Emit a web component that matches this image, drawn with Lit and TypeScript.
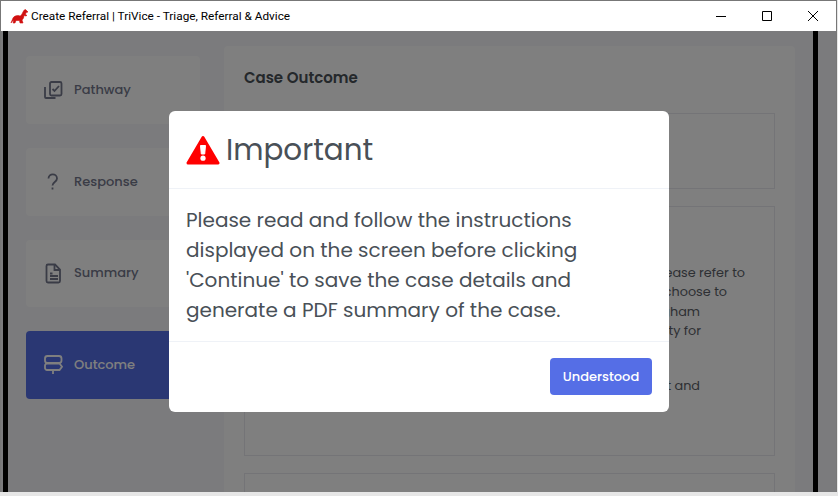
import { LitElement, html, css, svg } from 'lit';
import { customElement } from 'lit/decorators.js';

const navItems = [
  { label: 'Pathway', cls: '', icon: svg`<rect x="9" y="4" width="11.500" height="13.500" rx="1.500"/><path d="M4 9v10a1 1 0 0 0 1 1h9.500"/><path d="M11.500 11l2 2 4.500-5"/>` },
  { label: 'Response', cls: '', icon: svg`<path d="M7.500 8.500c0-5.500 8.500-5.500 8.500 0 0 3.500-4.500 3.500-4.500 7"/><path d="M11.500 17.500v2"/>` },
  { label: 'Summary', cls: '', icon: svg`<path d="M7 3.500h7l5 5V20a1.500 1.500 0 0 1-1.500 1.500h-10.500A1.500 1.500 0 0 1 5.500 20V5A1.500 1.500 0 0 1 7 3.500z"/><path d="M13.500 3.500v5.500h5.500"/><path d="M9 12.500h2.500M9 15h8M9 18h8"/>` },
  { label: 'Outcome', cls: 'active', icon: svg`<rect x="4" y="3" width="16.500" height="7" rx="2.500"/><path d="M6 10.500h12.500l2.500 3.200-2.500 3.300H6a2 2 0 0 1-2-2v-2.500a2 2 0 0 1 2-2z"/><path d="M12 17v4"/>` },
];

const behindLines = [
  { text: 'Please refer to', right: 30, cls: '' },
  { text: 'choose to', right: 48, cls: '' },
  { text: 'Birmingham', right: 75, cls: '' },
  { text: 'facility for', right: 74, cls: '' },
  { text: 'it and', right: 75, cls: 'para' },
];

@customElement('app-root')
export class AppRoot extends LitElement {
  static styles = css`
    :host {
      display: block;
      position: relative;
      width: 838px;
      height: 496px;
      overflow: hidden;
      background: #e6e6e6;
      font-family: Poppins, 'Open Sans', 'Liberation Sans', sans-serif;
    }
    .window {
      height: 492px;
      width: 837px;
      display: flex;
      flex-direction: column;
      position: relative;
      box-sizing: border-box;
      border: 1px solid #777;
      border-bottom: none;
      background: #f8f8fb;
    }
    .titlebar {
      height: 30px;
      flex: none;
      background: #fff;
      display: flex;
      align-items: center;
      padding-left: 9px;
      font: 11.800px Roboto, 'Open Sans', sans-serif;
      color: #000;
    }
    .titlebar .logo { width: 18px; height: 15px; margin-right: 3px; }
    .titlebar .title { flex: 1; white-space: nowrap; }
    .controls { display: flex; height: 30px; }
    .controls svg { width: 46px; height: 30px; fill: none; stroke: #000; stroke-width: 1; }
    .page {
      flex: 1;
      min-height: 0;
      display: flex;
      background: #f6f6fa;
    }
    .edge { width: 5px; background: #000; flex: none; }
    .edge.left { margin-left: 2px; }
    .gutter { width: 18px; flex: none; }
    .content {
      flex: 1;
      min-width: 0;
      display: flex;
      gap: 24px;
      padding: 15px 18px 0 18px;
      overflow: hidden;
    }
    .nav { width: 174px; flex: none; display: flex; flex-direction: column; gap: 24px; padding-top: 10.300px; }
    .nav-item {
      height: 67.670px;
      background: #fff;
      border-radius: 4px;
      display: flex;
      align-items: center;
      gap: 9px;
      padding-left: 15px;
      color: #74788d;
      font-size: 13px;
      font-weight: 500;
    }
    .nav-item svg { width: 24px; height: 24px; fill: none; stroke: currentColor; stroke-width: 1.800; flex: none; }
    .nav-item.active { background: #556ee6; color: #fff; }
    .main {
      flex: 1;
      min-width: 0;
      background: #fff;
      padding: 22px 20px;
      border-radius: 4px 4px 0 0;
    }
    h5 { margin: 0 0 25px; font-size: 15px; font-weight: 600; line-height: 20px; color: #495057; }
    .panel { border: 1px solid #e9e9ef; box-sizing: border-box; }
    .panel.first { height: 76px; margin-bottom: 17px; }
    .panel.second { height: 250px; padding-top: 56px; margin-bottom: 17px; }
    .panel.third { height: 40px; }
    .behind-line { font-size: 12.800px; line-height: 19.400px; color: #5c6168; white-space: nowrap; text-align: right; }
    .behind-line.para { margin-top: 35.600px; }
    .backdrop {
      position: absolute;
      inset: 30px 0 0 0;
      background: rgba(0, 0, 0, 0.5);
    }
    .modal {
      position: absolute;
      left: 168px;
      top: 80px;
      width: 500px;
      height: 301px;
      background: #fff;
      border-radius: 6px;
      display: flex;
      flex-direction: column;
      color: #495057;
    }
    .modal-header {
      height: 78px;
      box-sizing: border-box;
      border-bottom: 1px solid #eff2f7;
      display: flex;
      align-items: center;
      padding: 1px 17px 0;
      gap: 6px;
      font-size: 29.400px;
      font-weight: 400;
    }
    .modal-header svg { width: 34px; height: 30px; flex: none; }
    .modal-body {
      height: 153px;
      box-sizing: border-box;
      border-bottom: 1px solid #eff2f7;
      padding: 16px 17px 0;
      font-size: 20px;
      line-height: 30px;
    }
    .modal-footer { flex: 1; display: flex; justify-content: flex-end; align-items: center; padding: 0 17px 2px 0; }
    button {
      width: 102px;
      height: 37px;
      border: none;
      border-radius: 4px;
      background: #556ee6;
      color: #fff;
      font: 500 13px Poppins, 'Open Sans', 'Liberation Sans', sans-serif;
      padding: 1px 0 0;
    }
    .under {
      position: absolute;
      left: 24px;
      top: 494px;
      font: 11px/12px 'Liberation Sans', sans-serif;
      letter-spacing: 0.500px;
      color: #333;
    }
  `;

  render() {
    return html`
      <div class="window">
        <div class="titlebar">
          <svg class="logo" viewBox="0 0 18 15">
            <path fill="#d01010" stroke="#d01010" stroke-width="0.600" stroke-linejoin="round" d="M1 14L3 9C4 7 7 6 10 7C11 7 12 5 13 3C14 1 15 0 16 1L18 3L16 3.500L15.500 5.500L17 6.500L15 7L14 6C14 9 13 10 12 11L13 14H10L9.500 11.500H6L5 14H3L3.800 11.500L2.500 12Z"/>
          </svg>
          <span class="title">Create Referral | TriVice - Triage, Referral &amp; Advice</span>
          <div class="controls">
            <svg viewBox="0 0 46 30"><path d="M18 15.500h10"/></svg>
            <svg viewBox="0 0 46 30"><path d="M18.500 10.500h9v9h-9z"/></svg>
            <svg viewBox="0 0 46 30"><path d="M18 10l10 10M28 10L18 20"/></svg>
          </div>
        </div>
        <div class="page">
          <div class="edge left"></div>
          <div class="content">
            <div class="nav">
              ${navItems.map(item => html`
                <div class="nav-item ${item.cls}">
                  <svg viewBox="0 0 24 24">${item.icon}</svg>
                  <span>${item.label}</span>
                </div>
              `)}
            </div>
            <div class="main">
              <h5>Case Outcome</h5>
              <div class="panel first"></div>
              <div class="panel second">
                ${behindLines.map(line => html`
                  <div class="behind-line ${line.cls}" style="padding-right: ${line.right - 1}px">${line.text}</div>
                `)}
              </div>
              <div class="panel third"></div>
            </div>
          </div>
          <div class="edge"></div>
          <div class="gutter"></div>
        </div>
        <div class="backdrop">
          <div class="modal">
            <div class="modal-header">
              <svg viewBox="0 0 34 30">
                <path fill="#f00" stroke="#f00" stroke-width="3" stroke-linejoin="round" d="M17 2.500L32 28H2z"/>
                <path fill="#fff" stroke="#fff" stroke-width="1" stroke-linejoin="round" d="M14.500 10.500h5l-.8 8.500h-3.400z"/>
                <circle fill="#fff" cx="17" cy="23.200" r="2.600"/>
              </svg>
              <span>Important</span>
            </div>
            <div class="modal-body">
              Please read and follow the instructions displayed on the screen before clicking 'Continue' to save the case details and generate a PDF summary of the case.
            </div>
            <div class="modal-footer"><button>Understood</button></div>
          </div>
        </div>
      </div>
      <div class="under">1001</div>
    `;
  }
}
